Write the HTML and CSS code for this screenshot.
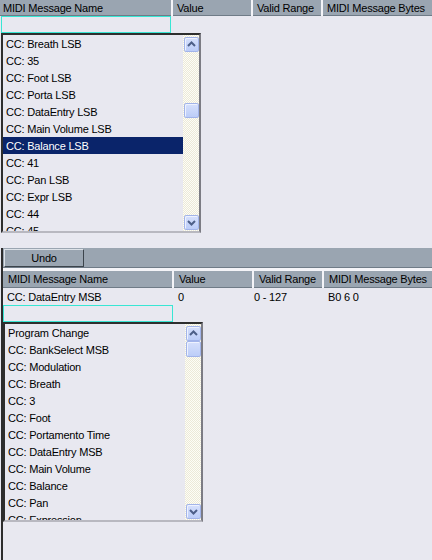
FILE: index.html
```html
<!DOCTYPE html>
<html>
<head>
<meta charset="utf-8">
<link rel="stylesheet" href="styles.css">
</head>
<body>
<div class="top">
  <div class="hdr hdr-top">
    <div class="hc first">MIDI Message Name</div>
    <div class="hc">Value</div>
    <div class="hc">Valid Range</div>
    <div class="hc">MIDI Message Bytes</div>
  </div>
  <div class="edit"></div>
  <div class="listbox lb-top">
    <div class="items">
      <div class="item">CC: Breath LSB</div>
      <div class="item">CC: 35</div>
      <div class="item">CC: Foot LSB</div>
      <div class="item">CC: Porta LSB</div>
      <div class="item">CC: DataEntry LSB</div>
      <div class="item">CC: Main Volume LSB</div>
      <div class="item sel">CC: Balance LSB</div>
      <div class="item">CC: 41</div>
      <div class="item">CC: Pan LSB</div>
      <div class="item">CC: Expr LSB</div>
      <div class="item">CC: 44</div>
      <div class="item">CC: 45</div>
    </div>
    <div class="sb">
      <div class="sbtn"><svg width="13" height="13" viewBox="0 0 13 13"><polyline points="3,8 6.5,4.5 10,8" fill="none" stroke="#4d5f88" stroke-width="2"/></svg></div>
      <div class="track"><div class="thumb thumb-mid"></div></div>
      <div class="sbtn"><svg width="13" height="13" viewBox="0 0 13 13"><polyline points="3,5 6.5,8.5 10,5" fill="none" stroke="#4d5f88" stroke-width="2"/></svg></div>
    </div>
  </div>
</div>
<div class="panel">
  <div class="toolbar"><div class="undo">Undo</div></div>
  <div class="hdr hdr-low">
    <div class="hc">MIDI Message Name</div>
    <div class="hc">Value</div>
    <div class="hc">Valid Range</div>
    <div class="hc">MIDI Message Bytes</div>
  </div>
  <div class="row">
    <div class="dc">CC: DataEntry MSB</div>
    <div class="dc">0</div>
    <div class="dc c3">0 - 127</div>
    <div class="dc">B0 6 0</div>
  </div>
  <div class="edit edit-low"></div>
  <div class="listbox lb-low">
    <div class="items">
      <div class="item">Program Change</div>
      <div class="item">CC: BankSelect MSB</div>
      <div class="item">CC: Modulation</div>
      <div class="item">CC: Breath</div>
      <div class="item">CC: 3</div>
      <div class="item">CC: Foot</div>
      <div class="item">CC: Portamento Time</div>
      <div class="item">CC: DataEntry MSB</div>
      <div class="item">CC: Main Volume</div>
      <div class="item">CC: Balance</div>
      <div class="item">CC: Pan</div>
      <div class="item">CC: Expression</div>
    </div>
    <div class="sb">
      <div class="sbtn"><svg width="13" height="13" viewBox="0 0 13 13"><polyline points="3,8 6.5,4.5 10,8" fill="none" stroke="#4d5f88" stroke-width="2"/></svg></div>
      <div class="track"><div class="thumb thumb-top"></div></div>
      <div class="sbtn"><svg width="13" height="13" viewBox="0 0 13 13"><polyline points="3,5 6.5,8.5 10,5" fill="none" stroke="#4d5f88" stroke-width="2"/></svg></div>
    </div>
  </div>
</div>
</body>
</html>
```

FILE: styles.css
```css
* { box-sizing: border-box; }
html, body { margin: 0; padding: 0; }
body {
  width: 432px;
  height: 560px;
  overflow: hidden;
  background: #e8e8f0;
  font-family: "Liberation Sans", Arial, sans-serif;
  font-size: 11px;
  letter-spacing: -0.2px;
  color: #000;
}
.hdr {
  display: grid;
  column-gap: 2px;
  background: #f4f4f8;
}
.hdr-top { grid-template-columns: 171px 78px 68px 1fr; }
.hdr-low {
  grid-template-columns: 169px 78px 68px 1fr;
  border-top: 3px solid #f4f4f8;
}
.hc {
  background: #9aa5b1;
  height: 16px;
  line-height: 16px;
  border-bottom: 1px solid #6f7b87;
  padding-left: 4px;
  white-space: nowrap;
  overflow: hidden;
}
.hdr-low .hc { height: 17px; padding-left: 5px; }
.hc.first { padding-left: 3px; }
.edit {
  width: 170px;
  height: 17px;
  margin-left: 1px;
  border: 1px solid #38e6d4;
}
.edit-low { margin-left: 0; }
.listbox {
  display: flex;
  width: 200px;
  height: 200px;
  border-top: 2px solid #2e2e2e;
  border-left: 2px solid #2e2e2e;
  border-right: 2px solid #7c7c84;
  border-bottom: 2px solid #b8b8c0;
}
.lb-top { margin-left: 1px; }
.items {
  flex: 1;
  overflow: hidden;
}
.item {
  height: 17px;
  line-height: 18px;
  padding-left: 3px;
  white-space: nowrap;
  overflow: hidden;
}
.item.sel {
  background: #0a246a;
  color: #fff;
}
.sb {
  width: 16px;
  display: flex;
  flex-direction: column;
  padding: 2px 0 1px 1px;
  background: repeating-conic-gradient(#ece9d8 0 25%, #fdfdf6 0 50%) 0 0 / 2px 2px;
}
.sbtn, .thumb {
  width: 15px;
  height: 15px;
  border: 1px solid #a2b4ea;
  border-radius: 2px;
  background: linear-gradient(#d6e0fc, #bccdf8);
  box-shadow: inset 1px 1px 0 #eef2ff;
  display: flex;
  align-items: center;
  justify-content: center;
  flex: none;
}
.track { flex: 1; }
.thumb-mid { margin-top: 51px; }
.thumb-top { margin-top: 0; height: 16px; }
.panel {
  margin-top: 15px;
  margin-left: 1px;
  border-left: 2px solid #2c2c2c;
  height: 312px;
}
.toolbar {
  height: 20px;
  background: #9aa5b1;
  border-bottom: 1px solid #6f7b87;
  padding: 1px 0 0 1px;
}
.undo {
  width: 80px;
  height: 18px;
  line-height: 16px;
  text-align: center;
  border-top: 1px solid #dde2e8;
  border-left: 1px solid #dde2e8;
  border-right: 1px solid #3c444c;
  border-bottom: 1px solid #3c444c;
}
.row {
  display: grid;
  grid-template-columns: 169px 78px 68px 1fr;
  column-gap: 2px;
  height: 17px;
  line-height: 18px;
}
.dc { padding-left: 4px; white-space: nowrap; }
.dc.c3 { padding-left: 0; }
```
